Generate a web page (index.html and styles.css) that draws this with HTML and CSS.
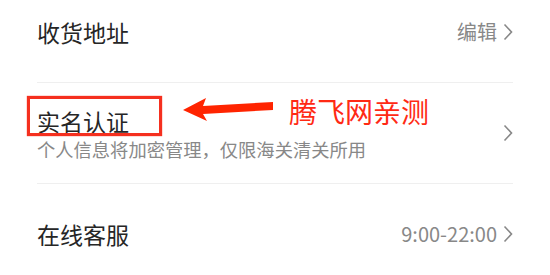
FILE: index.html
```html
<!DOCTYPE html>
<html lang="zh">
<head>
<meta charset="utf-8">
<link rel="stylesheet" href="styles.css">
</head>
<body>
<div class="page">
  <ul class="list">
    <li class="row">
      <span class="title">收货地址</span>
      <span class="extra">编辑<svg class="chev" viewBox="0 0 10 18"><polyline points="1.5,1.5 8.5,9 1.5,16.5"/></svg></span>
    </li>
    <li class="row">
      <div class="stack">
        <span class="title">实名认证</span>
        <span class="sub">个人信息将加密管理，仅限海关清关所用</span>
      </div>
      <span class="extra"><svg class="chev" viewBox="0 0 10 18"><polyline points="1.5,1.5 8.5,9 1.5,16.5"/></svg></span>
    </li>
    <li class="row">
      <span class="title">在线客服</span>
      <span class="extra">9:00-22:00<svg class="chev" viewBox="0 0 10 18"><polyline points="1.5,1.5 8.5,9 1.5,16.5"/></svg></span>
    </li>
  </ul>
  <div class="mark-box"></div>
  <svg class="mark-arrow" viewBox="0 0 550 275"><polygon points="183,110 206,98 203,106 273,102 273,110 203,114 207,121"/></svg>
  <div class="mark-text">腾飞网亲测</div>
</div>
</body>
</html>
```
FILE: styles.css
```css
html, body {
  margin: 0;
  padding: 0;
  background: #fff;
}
.page {
  position: relative;
  width: 550px;
  height: 275px;
  overflow: hidden;
  font-family: "Noto Sans CJK SC", "Noto Sans", sans-serif;
}
.list {
  list-style: none;
  margin: -18px 37px 0 37px;
  padding: 0;
}
.row {
  height: 100px;
  display: flex;
  align-items: center;
  justify-content: space-between;
  border-bottom: 1px solid #efefef;
}
.title {
  font-size: 23px;
  color: #262626;
  line-height: 30px;
}
.stack {
  display: flex;
  flex-direction: column;
  padding-top: 2px;
}
.sub {
  font-size: 18.3px;
  color: #888;
  line-height: 26px;
}
.extra {
  display: flex;
  align-items: center;
  font-size: 20px;
  color: #888;
  line-height: 28px;
}
.chev {
  width: 10px;
  height: 18px;
  margin-left: 6px;
  fill: none;
  stroke: #888;
  stroke-width: 1.6;
}
.mark-box {
  position: absolute;
  left: 27px;
  top: 96px;
  width: 129px;
  height: 34px;
  border: 3px solid #f5301f;
  box-shadow: 0 0 1px #f5301f;
}
.mark-arrow {
  position: absolute;
  left: 0;
  top: 0;
  width: 550px;
  height: 275px;
  fill: #ff2400;
}
.mark-text {
  position: absolute;
  left: 289px;
  top: 93px;
  font-size: 28px;
  line-height: 36px;
  color: #ff2a14;
}
```
